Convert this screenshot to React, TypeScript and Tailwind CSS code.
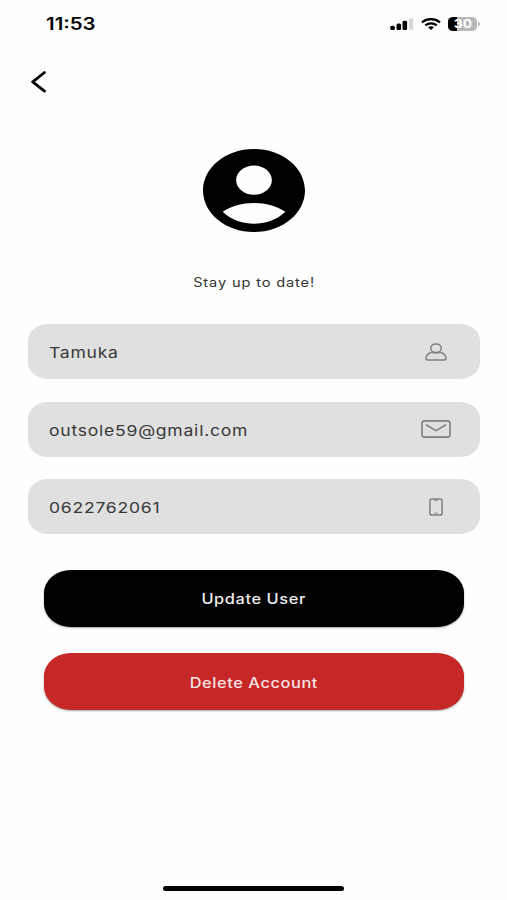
import type { ReactNode } from "react";

function StatusBar() {
  return (
    <div className="flex h-[47px] items-center justify-between pl-[46px] pr-[27px]">
      <span className="mt-0.5 origin-left scale-x-[1.2] text-[17px] leading-none font-semibold text-black">11:53</span>
      <div className="flex items-center">
        <svg className="h-3 w-6" viewBox="0 0 24 12">
          <rect x="0.3" y="7.8" width="4.6" height="4.2" rx="1.5" />
          <rect x="6.5" y="5.4" width="4.6" height="6.6" rx="1.5" />
          <rect x="12.5" y="2.8" width="4.6" height="9.2" rx="1.5" />
          <rect x="18.8" y="0.2" width="4.4" height="11.8" rx="1.5" fill="#d6d6d6" />
        </svg>
        <svg className="ml-[7px] h-3 w-5" viewBox="0 0 20 12" fill="none" stroke="#000" strokeWidth="2.3">
          <path d="M1 4.3C6 0 14 0 19 4.3" />
          <path d="M4.3 7.4c3.3-2.8 8.1-2.8 11.4 0" />
          <path d="M7 9.3c1.8-1.4 4.2-1.4 6 0L10 12z" fill="#000" stroke="none" />
        </svg>
        <div className="ml-[7px] flex h-[14px] w-[29px] items-center justify-center overflow-hidden rounded-[5px/4px] bg-[linear-gradient(to_right,#000_32%,#b9b9b9_32%)]">
          <span className="scale-x-[1.15] text-[12px] leading-none font-bold text-white">30</span>
        </div>
        <div className="ml-px h-1 w-[2px] rounded-r-full bg-[#b9b9b9]" />
      </div>
    </div>
  );
}

function Field({ value, icon }: { value: string; icon: ReactNode }) {
  return (
    <div className="flex h-[55.2px] items-center justify-between rounded-[20px/17px] bg-[#e0e0e0] pl-[21px]">
      <span className="mt-0.5 origin-left scale-x-[1.17] text-[15px] leading-none tracking-[0.65px] text-[#383838]">{value}</span>
      <div className="flex w-[88px] justify-center">{icon}</div>
    </div>
  );
}

export default function App() {
  return (
    <div className="flex h-[900px] w-full flex-col overflow-hidden bg-[#fefefe] font-['Inter',sans-serif]">
      <header className="h-32 bg-[#fdfdfd]">
        <StatusBar />
        <button className="ml-[30px] mt-6 block" aria-label="Back">
          <svg className="h-[22px] w-[17px]" viewBox="0 0 17 22" fill="none" stroke="#000" strokeWidth="2.8" strokeLinecap="round" strokeLinejoin="round">
            <path d="M14.5 1.5 2.7 10.9l11.8 9.2" />
          </svg>
        </button>
      </header>

      <main className="flex flex-col pt-[21px] pl-7 pr-[27px]">
        <svg className="h-[83px] w-[102px] self-center" viewBox="2 2 20 20" preserveAspectRatio="none">
          <path d="M12 2C6.48 2 2 6.48 2 12s4.48 10 10 10 10-4.48 10-10S17.52 2 12 2zm0 4c1.93 0 3.5 1.57 3.5 3.5S13.93 13 12 13s-3.5-1.57-3.5-3.5S10.07 6 12 6zm0 14c-2.03 0-4.43-.82-6.14-2.88C7.55 15.8 9.68 15 12 15s4.45.8 6.14 2.12C16.43 19.18 14.03 20 12 20z" />
        </svg>
        <p className="mt-11 scale-x-[1.17] self-center text-[12.5px] leading-[13px] tracking-[0.72px] text-[#333]">
          Stay up to date!
        </p>

        <div className="mt-[35.2px] flex flex-col gap-[22.2px]">
          <Field
            value="Tamuka"
            icon={
              <svg className="h-[18px] w-[22px]" viewBox="0 0 22 18" fill="none" stroke="#808080" strokeWidth="1.5">
                <path d="M6.8 9.2C3.2 10.2 1 12.7 1 15.6c0 1 .5 1.5 1.6 1.5h16.8c1.1 0 1.6-.5 1.6-1.5 0-2.9-2.2-5.4-5.8-6.4" />
                <ellipse cx="11" cy="5.2" rx="5.3" ry="4.3" />
                <path d="M6.8 9.2c2.5.9 5.9.9 8.4 0" />
              </svg>
            }
          />
          <Field
            value="outsole59@gmail.com"
            icon={
              <svg className="h-[18px] w-[30px]" viewBox="0 0 30 18" fill="none" stroke="#808080" strokeWidth="1.6">
                <rect x="1" y="0.9" width="28" height="16.2" rx="2.8" ry="2.3" />
                <path d="m5.4 5 9.6 5.6L24.6 5" strokeLinecap="round" strokeLinejoin="round" />
              </svg>
            }
          />
          <Field
            value="0622762061"
            icon={
              <svg className="h-[18px] w-[14px]" viewBox="0 0 14 18" fill="none" stroke="#808080" strokeWidth="1.5">
                <rect x="0.9" y="0.9" width="12.2" height="16.2" rx="2.2" ry="1.9" />
                <path d="M5.2 1.2c0 1 .4 1.5 1 1.5h1.6c.6 0 1-.5 1-1.5" strokeWidth="1" />
                <path d="M5.2 15.2h3.6" strokeWidth="0.9" />
              </svg>
            }
          />
        </div>

        <div className="mx-4 mt-[35.8px] flex flex-col gap-[26.6px]">
          <button className="flex h-[56.8px] items-center justify-center rounded-[27px/23px] bg-black shadow-[0_1px_2px_rgba(0,0,0,0.35)]">
            <span className="mt-0.5 scale-x-[1.17] text-[14px] leading-none font-medium tracking-[0.5px] text-[#eee]">Update User</span>
          </button>
          <button className="flex h-[56.8px] items-center justify-center rounded-[27px/23px] bg-[#c62828] shadow-[0_1px_2px_rgba(0,0,0,0.35)]">
            <span className="mt-0.5 scale-x-[1.17] text-[14px] leading-none font-medium tracking-[0.5px] text-[#fbe3e3]">Delete Account</span>
          </button>
        </div>
      </main>

      <div className="mt-auto mb-[8.8px] h-[5.6px] w-[181px] self-center rounded-full bg-black" />
    </div>
  );
}
